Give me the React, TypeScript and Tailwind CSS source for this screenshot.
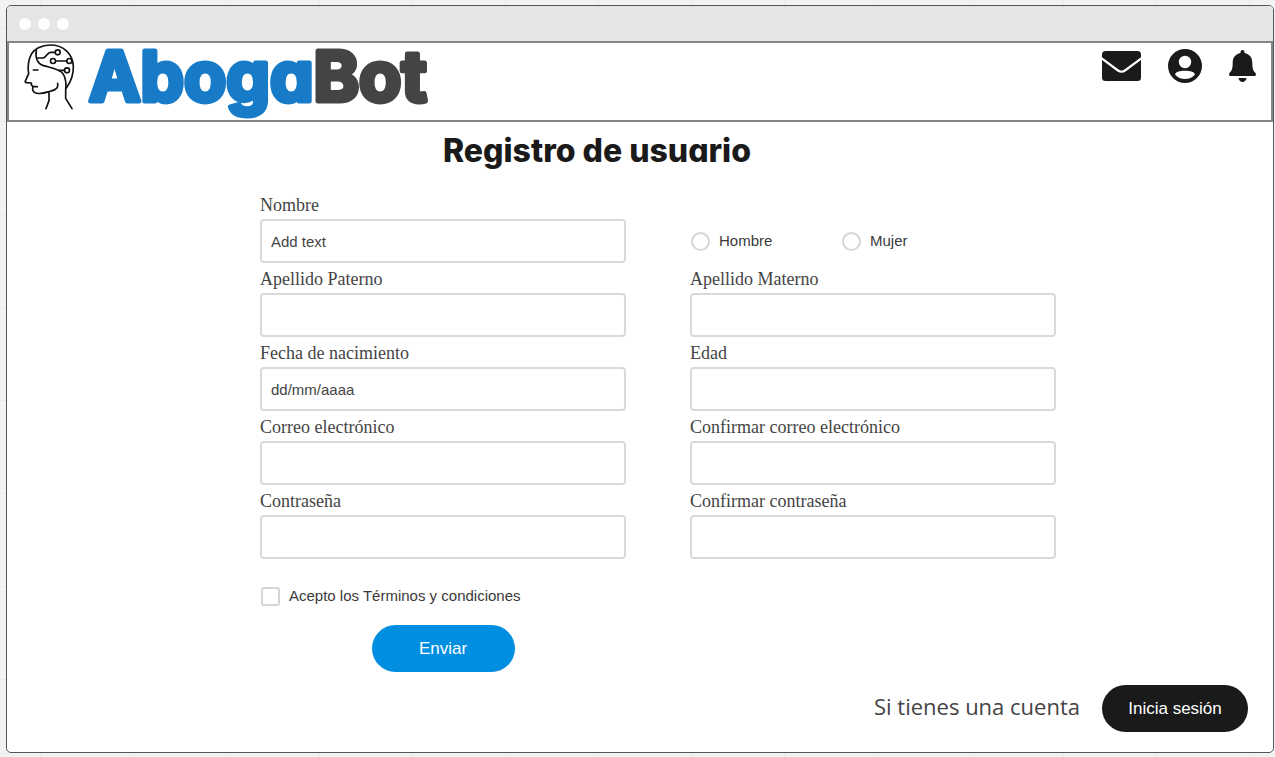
import type { InputHTMLAttributes, ReactNode } from "react";

function HeadLogo() {
  return (
    <svg
      viewBox="20 15 171 204"
      className="h-[68px] w-[57px] shrink-0"
      fill="none"
      stroke="#111111"
      strokeWidth="5"
      strokeLinecap="round"
      strokeLinejoin="round"
      aria-hidden="true"
    >
      <path d="M104 162 V188 L95 212 M104 161 C88 166 74 168 64 165 C57 162 54 158 55 151 L56 146 L51 140 L51 135 L35 134 C32 133 32 130 34 127 L43 107 C40 88 42 68 49 53 C58 32 82 21 108 21 C146 21 174 45 177 83 C178 112 169 132 156 150 M104 161 C118 157 130 154 130 145 V136" />
      <path d="M66 37 C62 60 70 78 87 83 C112 90 135 92 146 107 C156 123 156 140 154 156 V181 L173 212" />
      <path d="M70 60 H87 C97 57 99 43 109 43 H120 M124 69 H157 M132 97 H151" />
      <path d="M57 96 H71 M55 146 H69" />
      <circle cx="130" cy="43" r="7.5" />
      <circle cx="116" cy="69" r="7.5" />
      <circle cx="165" cy="69" r="7.5" />
      <circle cx="158" cy="97" r="7.5" />
    </svg>
  );
}

function Wordmark() {
  return (
    <svg
      viewBox="0 0 346 77"
      className="h-[77px] w-[346px] overflow-visible"
      role="img"
      aria-label="AbogaBot"
    >
      <text
        x="4"
        y="58"
        className="font-['Inter',sans-serif] text-[69px] font-bold [font-feature-settings:'cv11']"
        strokeWidth="5"
        strokeLinejoin="round"
      >
        <tspan fill="#177bc8" stroke="#177bc8">Aboga</tspan>
        <tspan fill="#444444" stroke="#444444">Bot</tspan>
      </text>
    </svg>
  );
}

function MailIcon() {
  return (
    <svg viewBox="0 0 39 30" className="h-[30px] w-[39px]" aria-hidden="true">
      <rect width="39" height="30" rx="3.5" fill="#1a1a1a" />
      <path d="M-1 7 L16 19.500 Q19.500 22 23 19.500 L40 7" fill="none" stroke="#fff" strokeWidth="2.200" />
    </svg>
  );
}

function UserIcon() {
  return (
    <svg viewBox="0 0 34 34" className="size-[34px]" aria-hidden="true">
      <circle cx="17" cy="17" r="17" fill="#1a1a1a" />
      <circle cx="17" cy="13" r="6.200" fill="#fff" />
      <path d="M7 25.500 C8 22.500 12 21.800 17 21.800 S26 22.500 27 25.500 C24.500 28.500 21 30 17 30 S9.500 28.500 7 25.500 Z" fill="#fff" />
    </svg>
  );
}

function BellIcon() {
  return (
    <svg viewBox="0 0 27 32" className="h-8 w-[27px]" fill="#1a1a1a" aria-hidden="true">
      <path d="M13.500 0 C14.700 0 15.500 .8 15.500 2 V3 C20.500 4 23.300 7.500 23.300 12.500 C23.300 18.500 24 20.500 26.500 23 C27.300 24.200 27 26 25.500 26 H1.500 C0 26 -.3 24.200 .5 23 C3 20.500 3.700 18.500 3.700 12.500 C3.700 7.500 6.500 4 11.500 3 V2 C11.500 .8 12.300 0 13.500 0 Z" />
      <path d="M9.500 28 H17.500 C17.300 30.300 15.700 32 13.500 32 S9.700 30.300 9.500 28 Z" />
    </svg>
  );
}

function IconButton({ label, children }: { label: string; children: ReactNode }) {
  return (
    <button type="button" aria-label={label} className="flex h-[46px] items-center">
      {children}
    </button>
  );
}

type FieldProps = InputHTMLAttributes<HTMLInputElement> & { id: string; label: string };

function Field({ id, label, ...props }: FieldProps) {
  return (
    <div>
      <label
        htmlFor={id}
        className="block font-['Liberation_Serif',serif] text-lg leading-7 text-[#444]"
      >
        {label}
      </label>
      <input
        id={id}
        name={id}
        {...props}
        className="block h-11 w-full rounded-[4px] border-2 border-[#d9d9d9] bg-white px-[9px] text-[15px] text-[#3a3a3a] placeholder:text-[#444]"
      />
    </div>
  );
}

function Radio({ value }: { value: string }) {
  return (
    <label className="flex w-[151px] items-center gap-[9px] text-[15px] text-[#3a3a3a]">
      <input
        type="radio"
        name="sexo"
        value={value}
        className="ml-px size-[19px] appearance-none rounded-full border-2 border-[#d6d6d6] bg-white checked:border-[#008ee0]"
      />
      {value}
    </label>
  );
}

export default function App() {
  return (
    <div className="flex min-h-screen flex-col bg-[#f2f2f2] bg-[linear-gradient(to_right,#e9e9e9_1px,transparent_1px),linear-gradient(to_bottom,#e9e9e9_1px,transparent_1px)] bg-[size:93px_93px] bg-[position:40px_28px] pt-[5px] pr-px pb-1 pl-[6px] font-['Liberation_Sans',sans-serif]">
      <div className="flex grow flex-col overflow-hidden rounded-[5px] border border-[#555] bg-white">
        <div className="flex h-[35px] shrink-0 items-center gap-[7px] bg-[#e5e5e5] pl-3">
          <span className="size-3 rounded-full bg-white" />
          <span className="size-3 rounded-full bg-white" />
          <span className="size-3 rounded-full bg-white" />
        </div>

        <header className="flex items-start justify-between border-2 border-[#858585] bg-white pr-[15px] pl-3">
          <a href="#" className="flex gap-[7px]">
            <HeadLogo />
            <Wordmark />
          </a>
          <nav className="flex gap-[27px]">
            <IconButton label="Mensajes">
              <MailIcon />
            </IconButton>
            <IconButton label="Perfil">
              <UserIcon />
            </IconButton>
            <IconButton label="Notificaciones">
              <BellIcon />
            </IconButton>
          </nav>
        </header>

        <main className="flex grow flex-col pt-2">
          <h1 className="pr-[86px] text-center font-['Inter',sans-serif] text-[32px] leading-[42px] font-extrabold text-[#1a1a1a] [font-feature-settings:'cv11']">
            Registro de usuario
          </h1>

          <form className="mt-[19px] pl-9" onSubmit={(e) => e.preventDefault()}>
            <div className="mx-auto grid max-w-[796px] grid-cols-2 gap-x-16 gap-y-0.5">
              <Field id="nombre" label="Nombre" placeholder="Add text" />
              <div className="flex h-11 self-end">
                <Radio value="Hombre" />
                <Radio value="Mujer" />
              </div>
              <Field id="paterno" label="Apellido Paterno" />
              <Field id="materno" label="Apellido Materno" />
              <Field id="nacimiento" label="Fecha de nacimiento" placeholder="dd/mm/aaaa" />
              <Field id="edad" label="Edad" />
              <Field id="correo" label="Correo electrónico" type="email" />
              <Field id="correo2" label="Confirmar correo electrónico" type="email" />
              <Field id="clave" label="Contraseña" type="password" />
              <Field id="clave2" label="Confirmar contraseña" type="password" />

              <div className="flex flex-col pt-[23px]">
                <label className="flex h-6 items-center gap-[9px] text-[15px] text-[#3a3a3a]">
                  <input
                    type="checkbox"
                    name="terminos"
                    className="ml-px size-[19px] appearance-none rounded-[3px] border-2 border-[#d6d6d6] bg-white checked:bg-[#008ee0]"
                  />
                  Acepto los Términos y condiciones
                </label>
                <button
                  type="submit"
                  className="mt-[17px] h-[47px] w-[143px] self-center rounded-full bg-[#008ee0] text-[17px] text-white"
                >
                  Enviar
                </button>
              </div>
            </div>
          </form>

          <div className="mt-auto flex items-start justify-end gap-[22px] pr-[25px] pb-5">
            <p className="font-['Open_Sans',sans-serif] text-[22px] leading-[42px] text-[#444]">
              Si tienes una cuenta
            </p>
            <button
              type="button"
              className="h-[47px] w-[146px] rounded-full bg-[#1a1a1a] text-[17px] text-white"
            >
              Inicia sesión
            </button>
          </div>
        </main>
      </div>
    </div>
  );
}
